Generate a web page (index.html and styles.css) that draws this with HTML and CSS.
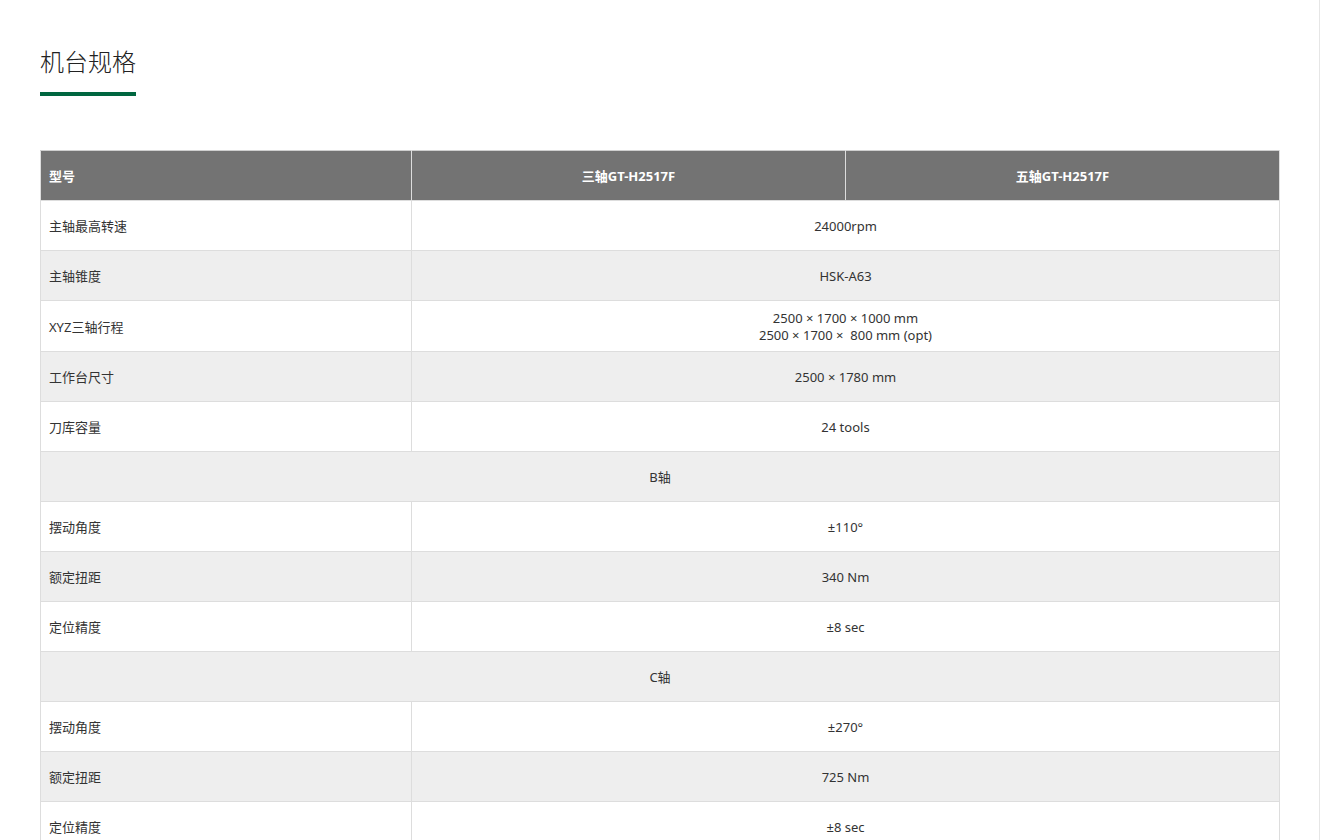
FILE: index.html
```html
<!DOCTYPE html>
<html lang="zh-CN">
<head>
<meta charset="utf-8">
<title>机台规格</title>
<link rel="stylesheet" href="styles.css">
</head>
<body>
<div class="page">
  <h2 class="title">机台规格</h2>
  <div class="title-bar"></div>
  <table class="spec">
    <colgroup>
      <col class="c-name">
      <col class="c-val">
      <col class="c-val">
    </colgroup>
    <thead>
      <tr>
        <th class="left">型号</th>
        <th>三轴GT-H2517F</th>
        <th>五轴GT-H2517F</th>
      </tr>
    </thead>
    <tbody>
      <tr><td class="left">主轴最高转速</td><td colspan="2">24000rpm</td></tr>
      <tr><td class="left">主轴锥度</td><td colspan="2">HSK-A63</td></tr>
      <tr><td class="left">XYZ三轴行程</td><td colspan="2">2500 × 1700 × 1000 mm<br>2500 × 1700 ×&nbsp; 800 mm (opt)</td></tr>
      <tr><td class="left">工作台尺寸</td><td colspan="2">2500 × 1780 mm</td></tr>
      <tr><td class="left">刀库容量</td><td colspan="2">24 tools</td></tr>
      <tr><td colspan="3">B轴</td></tr>
      <tr><td class="left">摆动角度</td><td colspan="2">±110°</td></tr>
      <tr><td class="left">额定扭距</td><td colspan="2">340 Nm</td></tr>
      <tr><td class="left">定位精度</td><td colspan="2">±8 sec</td></tr>
      <tr><td colspan="3">C轴</td></tr>
      <tr><td class="left">摆动角度</td><td colspan="2">±270°</td></tr>
      <tr><td class="left">额定扭距</td><td colspan="2">725 Nm</td></tr>
      <tr><td class="left">定位精度</td><td colspan="2">±8 sec</td></tr>
    </tbody>
  </table>
</div>
</body>
</html>
```

FILE: styles.css
```css
html, body {
  margin: 0;
  padding: 0;
  background: #fff;
}
body {
  font-family: "Noto Sans", "Noto Sans CJK SC", sans-serif;
  color: #333;
  overflow: hidden;
}
.page {
  width: 1320px;
  min-height: 900px;
  box-sizing: border-box;
  border-right: 1px solid #e6e6e6;
  padding: 45px 40px 40px 40px;
}
.title {
  margin: 0;
  font-size: 24px;
  line-height: 32px;
  font-weight: 300;
  color: #222;
  font-family: "Noto Sans CJK SC", sans-serif;
}
.title-bar {
  width: 96px;
  height: 4px;
  background: #006640;
  margin-top: 15px;
  margin-bottom: 54px;
}
.spec {
  width: 1240px;
  border-collapse: collapse;
  table-layout: fixed;
  font-size: 13px;
  line-height: 17px;
}
.c-name { width: 371px; }
.spec th, .spec td {
  border: 1px solid #dddddd;
  padding: 9px 8px 7px 8px;
  height: 33px;
  text-align: center;
  vertical-align: middle;
}
.spec th {
  background: #737373;
  color: #fff;
  font-weight: 700;
}
.spec thead tr th {
  border-top-color: #cfcfcf;
}
.spec .left {
  text-align: left;
}
.spec tbody tr:nth-child(even) td {
  background: #eeeeee;
}
.spec td {
  color: #333;
}
```
